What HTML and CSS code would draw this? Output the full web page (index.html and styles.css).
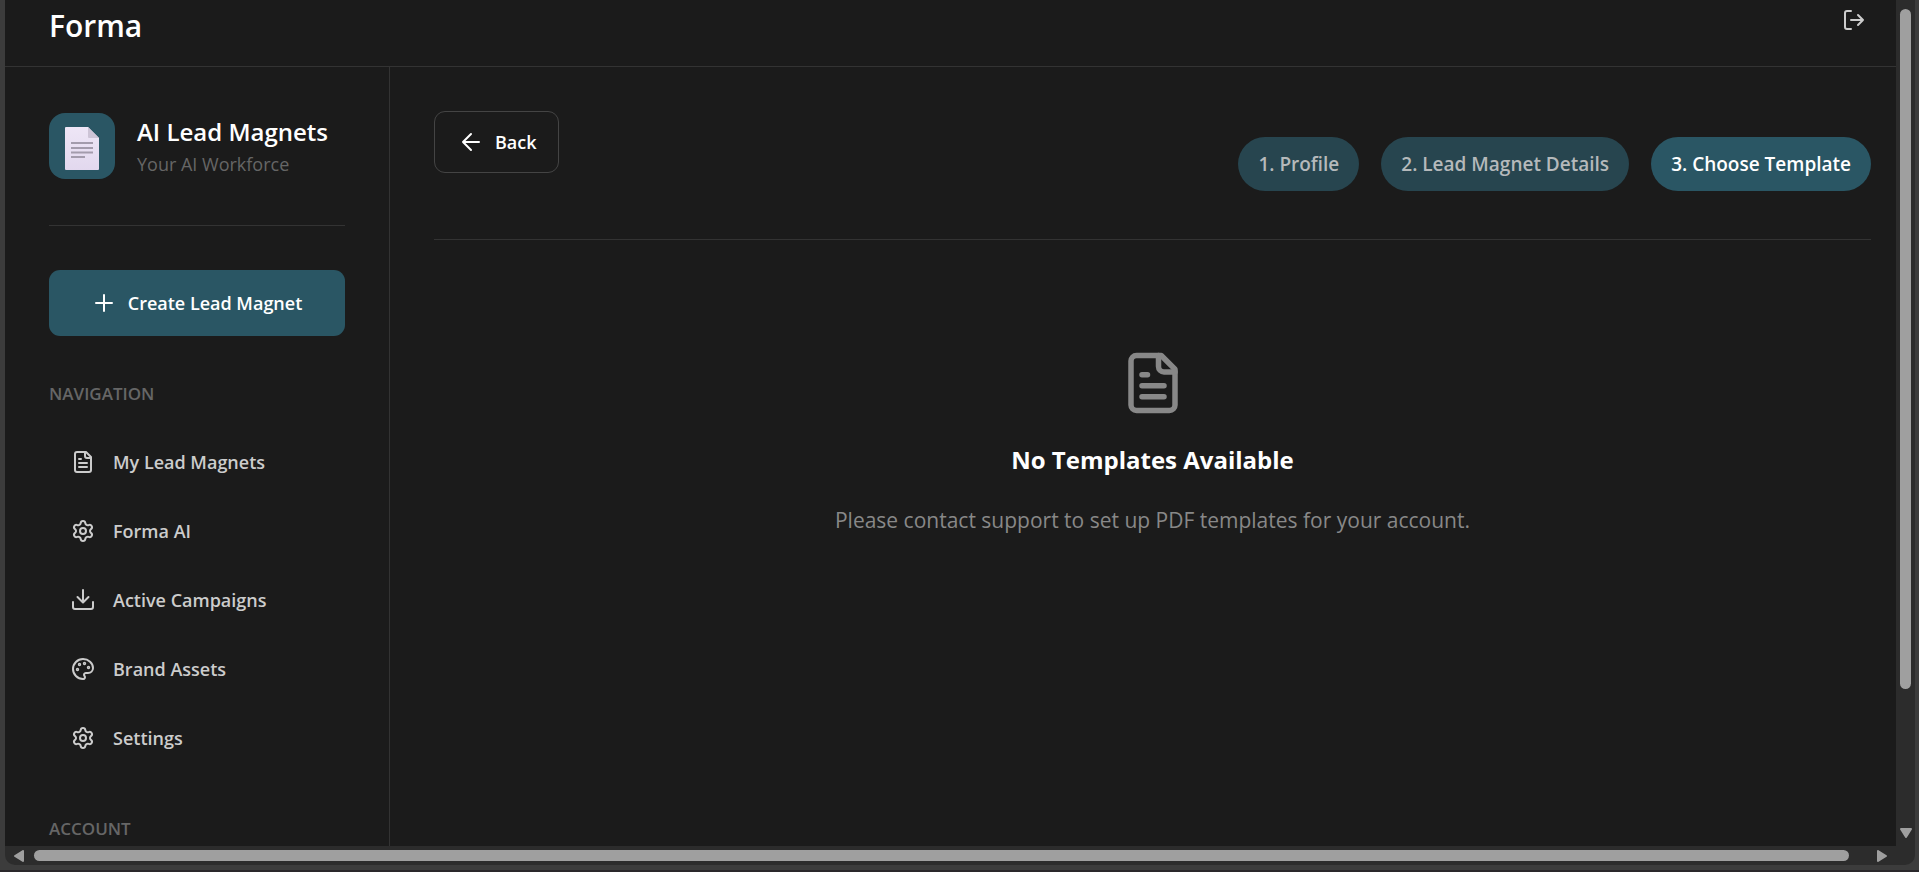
FILE: index.html
```html
<!DOCTYPE html>
<html lang="en">
<head>
<meta charset="utf-8">
<title>Forma</title>
<link rel="stylesheet" href="styles.css">
</head>
<body>
<svg class="sprite" aria-hidden="true">
  <symbol id="file" viewBox="0 0 24 24"><path d="M15 2H6a2 2 0 0 0-2 2v16a2 2 0 0 0 2 2h12a2 2 0 0 0 2-2V7Z"/><path d="M14 2v4a2 2 0 0 0 2 2h4"/><path d="M10 9H8M16 13H8M16 17H8"/></symbol>
  <symbol id="gear" viewBox="0 0 24 24"><path d="M9.671 4.136a2.34 2.34 0 0 1 4.659 0 2.34 2.34 0 0 0 3.319 1.915 2.34 2.34 0 0 1 2.33 4.033 2.34 2.34 0 0 0 0 3.831 2.34 2.34 0 0 1-2.33 4.033 2.34 2.34 0 0 0-3.319 1.915 2.34 2.34 0 0 1-4.659 0 2.34 2.34 0 0 0-3.32-1.915 2.34 2.34 0 0 1-2.33-4.033 2.34 2.34 0 0 0 0-3.831A2.34 2.34 0 0 1 6.35 6.051a2.34 2.34 0 0 0 3.319-1.915"/><circle cx="12" cy="12" r="3"/></symbol>
</svg>
<div class="window">
  <div class="viewport">
    <header class="topbar">
      <h1 class="brand">Forma</h1>
      <button class="logout" type="button" aria-label="Log out">
        <svg class="icon" viewBox="0 0 24 24"><path d="M9 21H5a2 2 0 0 1-2-2V5a2 2 0 0 1 2-2h4"/><path d="m16 17 5-5-5-5M21 12H9"/></svg>
      </button>
    </header>
    <div class="columns">
      <aside class="sidebar">
        <div class="product">
          <div class="product-tile">
            <svg class="product-doc" viewBox="0 0 34 43">
              <defs><linearGradient id="paper" x1="0" y1="0" x2="0" y2="1"><stop offset="0" stop-color="#eee6f6"/><stop offset="1" stop-color="#e2d8ee"/></linearGradient></defs>
              <path fill="url(#paper)" d="M1 0H23L34 11V42a1 1 0 0 1-1 1H1a1 1 0 0 1-1-1V1a1 1 0 0 1 1-1Z"/>
              <path fill="#cdc4d6" d="M23 0 34 11H24a1 1 0 0 1-1-1Z"/>
              <path stroke="#a39bac" stroke-width="2" d="M6 16H28M6 21H28M6 25.500H28M6 30H20"/>
            </svg>
          </div>
          <div class="product-text">
            <h2 class="product-name">AI Lead Magnets</h2>
            <p class="product-tag">Your AI Workforce</p>
          </div>
        </div>
        <button class="create" type="button">
          <svg class="icon" viewBox="0 0 24 24"><path d="M4 12h16M12 4v16"/></svg>
          Create Lead Magnet
        </button>
        <h3 class="group">Navigation</h3>
        <nav class="nav">
          <a class="nav-item" href="#magnets"><svg class="icon"><use href="#file"/></svg>My Lead Magnets</a>
          <a class="nav-item" href="#forma"><svg class="icon"><use href="#gear"/></svg>Forma AI</a>
          <a class="nav-item" href="#campaigns"><svg class="icon" viewBox="0 0 24 24"><path d="M12 14V2M22 14v5a2 2 0 0 1-2 2H4a2 2 0 0 1-2-2v-5M6.500 9 12 14.500 17.500 9"/></svg>Active Campaigns</a>
          <a class="nav-item" href="#assets"><svg class="icon" viewBox="0 0 24 24"><path d="M12 22a1 1 0 0 1 0-20 10 9 0 0 1 10 9 5 5 0 0 1-5 5h-2.250a1.750 1.750 0 0 0-1.400 2.800l.3.4a1.750 1.750 0 0 1-1.400 2.800z"/><circle cx="13.500" cy="6.500" r=".7"/><circle cx="17.500" cy="10.500" r=".7"/><circle cx="6.500" cy="12.500" r=".7"/><circle cx="8.500" cy="7.500" r=".7"/></svg>Brand Assets</a>
          <a class="nav-item" href="#settings"><svg class="icon"><use href="#gear"/></svg>Settings</a>
        </nav>
        <h3 class="group">Account</h3>
      </aside>
      <main class="main">
        <div class="wizard">
          <button class="back" type="button">
            <svg class="icon" viewBox="0 0 24 24"><path d="M20 12H4M12 4l-8 8 8 8"/></svg>
            Back
          </button>
          <ol class="steps">
            <li class="step">1. Profile</li>
            <li class="step">2. Lead Magnet Details</li>
            <li class="step step-active" aria-current="step">3. Choose Template</li>
          </ol>
        </div>
        <section class="empty">
          <svg class="empty-icon"><use href="#file"/></svg>
          <h2 class="empty-title">No Templates Available</h2>
          <p class="empty-text">Please contact support to set up PDF templates for your account.</p>
        </section>
      </main>
    </div>
  </div>
  <div class="vbar" aria-hidden="true">
    <div class="vthumb"></div>
    <svg class="arrow-down" viewBox="0 0 12 10"><path d="M1 1H11L6 9Z"/></svg>
  </div>
  <div class="hbar" aria-hidden="true">
    <svg class="arrow-side" viewBox="0 0 10 12"><path d="M9 1V11L1 6Z"/></svg>
    <div class="hthumb"></div>
    <svg class="arrow-side" viewBox="0 0 10 12"><path d="M1 1V11L9 6Z"/></svg>
  </div>
</div>
</body>
</html>
```

FILE: styles.css
```css
* { box-sizing: border-box; }

body {
  margin: 0;
  height: 100vh;
  padding: 0 4px 5px 5px;
  border-bottom: 2px solid #2a282b;
  overflow: hidden;
  background: #3c3c3c;
  color: #fff;
  font-family: "Open Sans", "Noto Sans", sans-serif;
  font-size: 18px;
}

h1, h2, h3, p, ol { margin: 0; padding: 0; }
button { font: inherit; color: inherit; cursor: pointer; }
.sprite { display: none; }

.icon, .empty-icon {
  flex: none;
  fill: none;
  stroke: currentColor;
  stroke-width: 2;
  stroke-linecap: round;
  stroke-linejoin: round;
}
.icon { width: 24px; height: 24px; }

.window {
  height: 100%;
  display: grid;
  grid-template: minmax(0, 1fr) 19px / minmax(0, 1fr) 19px;
  overflow: hidden;
  border-radius: 0 0 10px 10px;
  background: #2c2c2c;
}
.viewport {
  display: flex;
  flex-direction: column;
  overflow: hidden;
  background: #1b1b1b;
}

.topbar {
  flex: none;
  display: flex;
  align-items: flex-start;
  justify-content: space-between;
  height: 67px;
  padding: 0 26px 0 44px;
  border-bottom: 1px solid #333;
}
.brand { font-size: 30px; font-weight: 600; line-height: 52px; }
.logout {
  display: flex;
  padding: 8px 4px;
  border: 0;
  background: none;
  color: #ccc;
}

.columns { flex: 1; display: flex; min-height: 0; }
.sidebar {
  flex: none;
  width: 385px;
  padding: 46px 44px 0;
  border-right: 1px solid #333;
}
.product {
  display: flex;
  align-items: center;
  gap: 22px;
  padding-bottom: 46px;
  border-bottom: 1px solid #333;
}
.product-tile {
  flex: none;
  display: grid;
  place-items: center;
  width: 66px;
  height: 66px;
  padding-top: 4px;
  border-radius: 16px;
  background: #2a5664;
}
.product-doc { width: 34px; height: 43px; }
.product-text { padding-top: 2px; }
.product-name { font-size: 24px; font-weight: 600; line-height: 34px; white-space: nowrap; }
.product-tag { font-size: 18px; line-height: 30px; color: #666; }

.create {
  display: flex;
  align-items: center;
  justify-content: center;
  gap: 12px;
  width: 100%;
  height: 66px;
  margin: 44px 0;
  border: 0;
  border-radius: 11px;
  background: #2a5664;
  font-weight: 600;
}
.group {
  font-size: 17px;
  font-weight: 600;
  line-height: 28px;
  color: #666;
  text-transform: uppercase;
}
.nav { display: grid; gap: 4px; padding: 21px 0 45px; }
.nav-item {
  display: flex;
  align-items: center;
  gap: 18px;
  height: 65px;
  padding: 0 22px;
  color: #ccc;
  font-weight: 600;
  text-decoration: none;
}

.main { flex: 1; min-width: 0; padding: 44px 25px 0 44px; }
.wizard {
  display: flex;
  align-items: flex-start;
  justify-content: space-between;
  padding-bottom: 48px;
  border-bottom: 1px solid #333;
}
.back {
  display: flex;
  align-items: center;
  gap: 12px;
  height: 62px;
  padding: 0 21px 0 24px;
  border: 1px solid #444;
  border-radius: 11px;
  background: none;
  font-weight: 600;
}
.steps { display: flex; gap: 22px; padding-top: 26px; list-style: none; }
.step {
  padding: 0 20px;
  border-radius: 27px;
  background: #27454f;
  color: #b5b9bb;
  font-size: 19px;
  font-weight: 600;
  line-height: 54px;
}
.step-active { background: #2a5664; color: #fff; }

.empty {
  display: flex;
  flex-direction: column;
  align-items: center;
  padding-top: 110px;
  text-align: center;
}
.empty-icon { width: 66px; height: 66px; color: #888; }
.empty-title { margin-top: 24px; font-size: 24px; font-weight: 700; line-height: 40px; }
.empty-text { margin-top: 22px; font-size: 21px; line-height: 36px; color: #888; }

.vbar {
  display: flex;
  flex-direction: column;
  align-items: center;
  justify-content: space-between;
  padding: 9px 0 8px;
}
.vthumb { width: 11px; height: 82%; border-radius: 6px; background: #9f9f9f; }
.hbar {
  display: flex;
  align-items: center;
  justify-content: space-between;
  gap: 10px;
  padding: 0 9px;
}
.hthumb { flex: 1; height: 11px; margin-right: 18px; border-radius: 6px; background: #9f9f9f; }
.arrow-down { width: 12px; height: 10px; }
.arrow-side { width: 10px; height: 12px; }
.arrow-down, .arrow-side {
  flex: none;
  fill: #9f9f9f;
  stroke: #9f9f9f;
  stroke-width: 2;
  stroke-linejoin: round;
}
```
